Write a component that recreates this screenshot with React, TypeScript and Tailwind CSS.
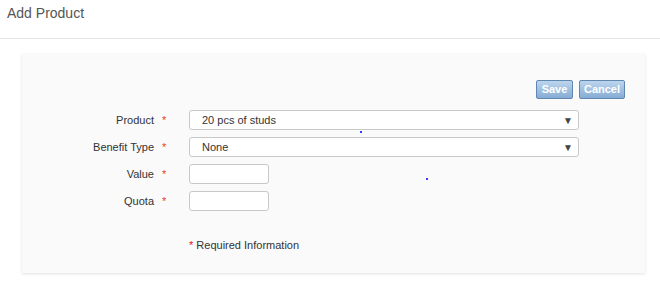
import { useState } from "react";

const font = { fontFamily: '"Liberation Sans", Arial, sans-serif' };

interface FieldRowProps {
  label: string;
  children: React.ReactNode;
}

function FieldRow({ label, children }: FieldRowProps) {
  return (
    <div className="flex items-center h-[20px]">
      <label className="w-[132px] text-right text-[11px] text-[#333]">{label}</label>
      <span className="w-[35px] pl-[8px] text-[11px] text-[#e8402a]">*</span>
      {children}
    </div>
  );
}

function SelectBox({ value, options }: { value: string; options: string[] }) {
  const [current, setCurrent] = useState(value);
  return (
    <div className="relative w-[390px] h-[20px]">
      <select
        value={current}
        onChange={(e) => setCurrent(e.target.value)}
        className="block appearance-none w-full h-[20px] rounded-[3px] border border-[#c8c8c8] bg-white pl-[12px] text-[11px] leading-[18px] text-[#333] outline-none"
        style={font}
      >
        {options.map((o) => (
          <option key={o}>{o}</option>
        ))}
      </select>
      <span className="pointer-events-none absolute right-[6px] top-0 flex h-[20px] items-center text-[10px] text-[#444]">▼</span>
    </div>
  );
}

export default function App() {
  return (
    <div className="w-[660px] h-[283px] bg-white" style={font}>
      {/* ヘッダー */}
      <div className="h-[39px] border-b border-[#e6e6e6] pl-[7px] pt-[3px]">
        <h1 className="text-[14px] text-[#555]">Add Product</h1>
      </div>

      {/* フォームパネル */}
      <div className="relative ml-[22px] mt-[15px] w-[623px] bg-[#fafafa] shadow-[0_1px_3px_rgba(0,0,0,0.12)] pt-[26px] pb-[19px]">
        <div className="flex justify-end gap-[6px] pr-[20px]">
          <button className="h-[19px] w-[37px] rounded-[2px] border border-[#5f87b0] bg-gradient-to-b from-[#bcd5ee] to-[#86acd4] text-[11px] font-bold text-white">
            Save
          </button>
          <button className="h-[19px] w-[46px] rounded-[2px] border border-[#5f87b0] bg-gradient-to-b from-[#bcd5ee] to-[#86acd4] text-[11px] font-bold text-white">
            Cancel
          </button>
        </div>

        <div className="mt-[11px] flex flex-col gap-[7px]">
          <FieldRow label="Product">
            <SelectBox value="20 pcs of studs" options={["20 pcs of studs"]} />
          </FieldRow>
          <FieldRow label="Benefit Type">
            <SelectBox value="None" options={["None"]} />
          </FieldRow>
          <FieldRow label="Value">
            <input className="block h-[20px] w-[80px] rounded-[3px] border border-[#c8c8c8] bg-white outline-none" />
          </FieldRow>
          <FieldRow label="Quota">
            <input className="block h-[20px] w-[80px] rounded-[3px] border border-[#c8c8c8] bg-white outline-none" />
          </FieldRow>
        </div>

        <p className="mt-[26px] ml-[167px] text-[11px] text-[#333]">
          <span className="text-[#d9142b]">*</span> Required Information
        </p>

        <span className="absolute left-[338px] top-[77px] h-[2px] w-[2px] bg-[#3b3bff]" />
        <span className="absolute left-[404px] top-[124px] h-[2px] w-[2px] bg-[#3b3bff]" />
      </div>
    </div>
  );
}
